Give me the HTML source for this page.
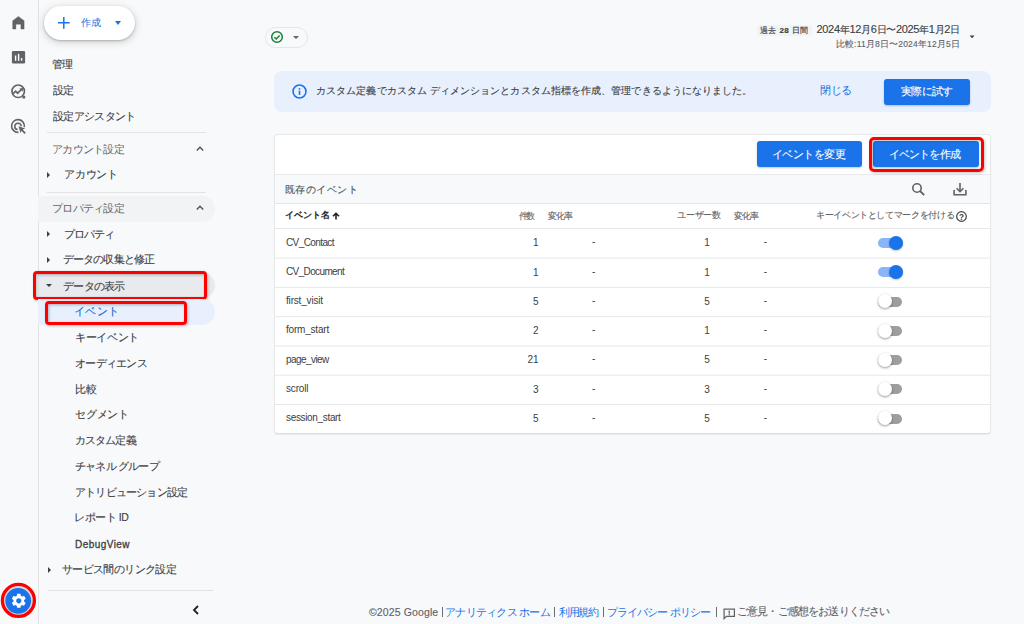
<!DOCTYPE html>
<html><head><meta charset="utf-8">
<style>
*{box-sizing:border-box;margin:0;padding:0}
html,body{width:1024px;height:624px;overflow:hidden;background:#f8f9fa;font-family:"Liberation Sans",sans-serif;color:#3c4043}
.a{position:absolute;white-space:nowrap}
.t{line-height:1.25}
.div{position:absolute;height:1px;background:#dadce0}
.tri{position:absolute;width:0;height:0;border-top:3px solid transparent;border-bottom:3px solid transparent;border-left:3.5px solid #3c4043}
.trid{position:absolute;width:0;height:0;border-left:3px solid transparent;border-right:3px solid transparent;border-top:3px solid #3c4043}
.red{position:absolute;border:3px solid #ff0000;border-radius:4px;box-shadow:1px 1px 3px rgba(0,0,0,.25), inset 1px 1px 3px rgba(0,0,0,.28)}
.td{font-size:10px;line-height:14px;color:#3c4043}
.lk{color:#1a73e8}
.sk{-webkit-text-stroke:0.12px currentColor}

.k{font-size:10px}

</style></head><body>
<div class="a" style="left:38px;top:0;width:1px;height:624px;background:#e3e3e3"></div>
<svg class="a" style="left:0;top:0" width="40" height="624" viewBox="0 0 40 624">
<path d="M18.4 16.4 L24.1 20.7 V29.1 H20.9 V24.2 H15.9 V29.1 H12.7 V20.7 Z" fill="#5f6368" stroke="#5f6368" stroke-width="0.4" stroke-linejoin="round"/>
<rect x="11.9" y="50.9" width="13.2" height="12.7" rx="1.4" fill="#5f6368"/>
<rect x="14.9" y="55.5" width="1.4" height="5.3" fill="#fff"/><rect x="17.9" y="53.9" width="1.4" height="6.9" fill="#fff"/><rect x="20.9" y="58" width="1.4" height="2.8" fill="#fff"/>
<circle cx="18.2" cy="91.3" r="6.25" fill="none" stroke="#5f6368" stroke-width="1.6"/><path d="M22.6 95.7 H25.2 V98.5 H22.4 Z" fill="#5f6368"/>
<path d="M13.2 93.6 L15.6 91.2 L17.6 93.2 L21.4 89.5" fill="none" stroke="#5f6368" stroke-width="1.7"/>
<path d="M19.3 88.4 L23.1 88 L22.7 91.8 Z" fill="#5f6368"/>
<path d="M24.3 127.2 A6.4 6.4 0 1 0 18.5 132.4" fill="none" stroke="#5f6368" stroke-width="1.6"/>
<path d="M21.2 126.3 A3.2 3.2 0 1 0 17.6 129.6" fill="none" stroke="#5f6368" stroke-width="1.5"/>
<path d="M18.6 126.2 L25.2 128.6 L22.6 129.6 L25.8 132.8 L24.6 134 L21.4 130.8 L20.5 133.3 Z" fill="#5f6368"/>
<circle cx="18.4" cy="600.4" r="16" fill="#d3d6d9" stroke="#ff0000" stroke-width="3.3"/>
<circle cx="18.2" cy="600.8" r="12.9" fill="#1a73e8"/>
</svg>
<svg class="a" style="left:9.9px;top:592.3px" width="17.6" height="17.6" viewBox="0 0 24 24"><path fill="#fff" d="M19.14 12.94c.04-.3.06-.61.06-.94 0-.32-.02-.64-.07-.94l2.03-1.58a.49.49 0 0 0 .12-.61l-1.92-3.32a.488.488 0 0 0-.59-.22l-2.39.96c-.5-.38-1.03-.7-1.62-.94l-.36-2.54a.484.484 0 0 0-.48-.41h-3.84c-.24 0-.43.17-.47.41l-.36 2.54c-.59.24-1.13.57-1.62.94l-2.39-.96c-.22-.08-.47 0-.59.22L2.74 8.87c-.12.21-.08.47.12.61l2.03 1.58c-.05.3-.09.63-.09.94s.02.64.07.94l-2.03 1.58a.49.49 0 0 0-.12.61l1.92 3.32c.12.22.37.29.59.22l2.39-.96c.5.38 1.03.7 1.62.94l.36 2.54c.05.24.24.41.48.41h3.84c.24 0 .44-.17.47-.41l.36-2.54c.59-.24 1.13-.56 1.62-.94l2.39.96c.22.08.47 0 .59-.22l1.92-3.32c.12-.22.07-.47-.12-.61l-2.01-1.58zM12 15.6c-1.98 0-3.6-1.62-3.6-3.6s1.62-3.6 3.6-3.6 3.6 1.62 3.6 3.6-1.62 3.6-3.6 3.6z"/></svg>

<!-- create -->
<div class="a" style="left:44px;top:5.5px;width:91px;height:34.5px;border-radius:17px;background:#fff;box-shadow:0 1px 2px rgba(60,64,67,.3),0 2px 6px 2px rgba(60,64,67,.15)"></div>
<svg class="a" style="left:57px;top:16px" width="14" height="14" viewBox="0 0 14 14"><path d="M6.8 1 V12.7 M1 6.8 H12.7" stroke="#1a73e8" stroke-width="1.5"/></svg>
<div class="trid" style="left:114.5px;top:21.3px;border-top:4px solid #1a73e8;border-left-width:3.5px;border-right-width:3.5px"></div>

<!-- nav shapes -->
<div class="div" style="left:47px;top:132px;width:159px;background:#e3e3e3"></div>
<div class="a" style="left:195.6px;top:146.4px;width:8px;height:5px"><svg width="8" height="5" viewBox="0 0 8 5" style="display:block"><path d="M0.8 4.4 L4 1.2 L7.2 4.4" fill="none" stroke="#4d5156" stroke-width="1.35"/></svg></div>
<div class="tri" style="left:47.1px;top:172px"></div>
<div class="div" style="left:47px;top:192px;width:159px;background:#e3e3e3"></div>
<div class="a" style="left:38px;top:196px;width:177px;height:25.5px;border-radius:0 13px 13px 0;background:#f1f3f4"></div>
<div class="a" style="left:195.6px;top:205.4px;width:8px;height:5px"><svg width="8" height="5" viewBox="0 0 8 5" style="display:block"><path d="M0.8 4.4 L4 1.2 L7.2 4.4" fill="none" stroke="#4d5156" stroke-width="1.35"/></svg></div>
<div class="tri" style="left:47.1px;top:231.3px"></div>
<div class="tri" style="left:47.1px;top:257px"></div>
<div class="a" style="left:38px;top:272.5px;width:177px;height:25.5px;border-radius:0 13px 13px 0;background:#e8eaed"></div>
<div class="trid" style="left:46.1px;top:283.8px;border-top-width:3.3px"></div>
<div class="red" style="left:33.2px;top:270.6px;width:173.8px;height:29.2px"></div>
<div class="a" style="left:38px;top:299px;width:177px;height:25.5px;border-radius:0 13px 13px 0;background:#e8f0fe"></div>
<div class="red" style="left:45px;top:300.5px;width:142px;height:24.5px"></div>
<div class="tri" style="left:47.6px;top:566.5px"></div>
<div class="div" style="left:47.5px;top:590px;width:165px;background:#e3e3e3"></div>
<svg class="a" style="left:192px;top:604.7px" width="8" height="10" viewBox="0 0 8 10"><path d="M6 1 L2 5 L6 9" fill="none" stroke="#202124" stroke-width="1.8"/></svg>

<!-- status chip -->
<div class="a" style="left:264.5px;top:27px;width:43.5px;height:20.5px;border-radius:11px;border:1px solid #e3e5e8;background:#f8f9fa"></div>
<svg class="a" style="left:270px;top:30px" width="14" height="14" viewBox="0 0 14 14"><circle cx="7" cy="7" r="5.3" fill="none" stroke="#188038" stroke-width="1.5"/><path d="M4.4 7.2 L6.2 9 L9.6 5.4" fill="none" stroke="#188038" stroke-width="1.5"/></svg>
<div class="trid" style="left:292.6px;top:35.8px;border-top-color:#5f6368"></div>

<!-- date -->
<div class="a" style="left:757px;top:25px;width:55px;height:11px;background:#f1f3f4;border-radius:2px"></div>
<svg class="a" style="left:968px;top:34px" width="8" height="6" viewBox="0 0 8 6"><path d="M1.6 1.6 H6.6 L4.1 4.3 Z" fill="#3c4043"/></svg>

<!-- banner -->
<div class="a" style="left:274px;top:71px;width:717px;height:41px;border-radius:8px;background:#e8f0fe"></div>
<svg class="a" style="left:291.5px;top:84px" width="15" height="15" viewBox="0 0 15 15"><circle cx="7.5" cy="7.5" r="6.45" fill="none" stroke="#1a73e8" stroke-width="1.6"/><rect x="6.7" y="6.6" width="1.6" height="4.3" fill="#1a73e8"/><rect x="6.7" y="4.1" width="1.6" height="1.5" fill="#1a73e8"/></svg>
<div class="a" style="left:884px;top:79px;width:86px;height:26px;border-radius:3px;background:#1a73e8;box-shadow:0 1px 2px rgba(60,64,67,.3)"></div>

<!-- card -->
<div class="a" style="left:274px;top:134px;width:717px;height:300px;border:1px solid #e6e8ea;border-bottom-color:#dcdee0;border-radius:4px;background:#fff;overflow:hidden;box-shadow:0 1px 1px rgba(60,64,67,.08)">
  <div class="a" style="left:0;top:39px;width:715px;height:30px;background:#f8f9fa;border-top:1px solid #e8eaed;border-bottom:1px solid #e3e5e8"></div>
</div>
<div class="a" style="left:757px;top:141px;width:105px;height:26px;border-radius:3px;background:#1a73e8;box-shadow:0 1px 2px rgba(60,64,67,.3)"></div>
<div class="a" style="left:873px;top:141px;width:106px;height:26px;border-radius:3px;background:#1a73e8;box-shadow:0 1px 2px rgba(60,64,67,.3)"></div>
<div class="red" style="left:869px;top:137px;width:115px;height:34.5px;border-radius:5px"></div>
<svg class="a" style="left:911px;top:182px" width="15" height="15" viewBox="0 0 15 15"><circle cx="6" cy="6" r="4.2" fill="none" stroke="#5f6368" stroke-width="1.6"/><path d="M9 9 L13.2 13.2" stroke="#5f6368" stroke-width="1.8"/></svg>
<svg class="a" style="left:952px;top:181px" width="16" height="16" viewBox="0 0 16 16"><path d="M8 2 V10.6 M4.6 7.3 L8 10.7 L11.4 7.3" fill="none" stroke="#5f6368" stroke-width="1.6"/><path d="M2.1 8.9 V13.8 H13.9 V8.9" fill="none" stroke="#5f6368" stroke-width="1.6"/></svg>
<svg class="a" style="left:332px;top:212px" width="8" height="8" viewBox="0 0 8 8"><path d="M4 7.5 V1.5 M1 4.3 L4 1.3 L7 4.3" fill="none" stroke="#202124" stroke-width="1.6"/></svg>
<svg class="a" style="left:956.2px;top:211.1px" width="11" height="11" viewBox="0 0 11 11"><circle cx="5.5" cy="5.5" r="4.8" fill="none" stroke="#3c4043" stroke-width="1.2"/><text x="5.5" y="8.6" font-size="8.2" font-weight="bold" text-anchor="middle" fill="#3c4043" font-family="Liberation Sans">?</text></svg>

<!-- footer -->
<div class="a" style="left:441.8px;top:607.4px;width:1.2px;height:9.4px;background:#6b6f74"></div>
<div class="a" style="left:553.9px;top:607.4px;width:1.2px;height:9.4px;background:#6b6f74"></div>
<div class="a" style="left:602.5px;top:607.4px;width:1.2px;height:9.4px;background:#6b6f74"></div>
<div class="a" style="left:715.6px;top:607.4px;width:1.2px;height:9.4px;background:#6b6f74"></div>
<svg class="a" style="left:722.5px;top:607.5px" width="13" height="12" viewBox="0 0 13 12"><path d="M1.1 1.1 H11.4 V8.3 H3.4 L1.1 10.6 Z" fill="none" stroke="#5f6368" stroke-width="1.25"/><rect x="5.6" y="2.6" width="1.3" height="3" fill="#5f6368"/><rect x="5.6" y="6.1" width="1.3" height="1.2" fill="#5f6368"/></svg>

<div class="a" style="left:877.6px;top:238.03px;width:25px;height:10px;border-radius:5px;background:#8ab4f8"></div>
<div class="a" style="left:888.8px;top:235.83px;width:14.4px;height:14.4px;border-radius:50%;background:#1a73e8;box-shadow:0 1px 2px rgba(0,0,0,.25)"></div>
<div class="a" style="left:877.6px;top:267.29px;width:25px;height:10px;border-radius:5px;background:#8ab4f8"></div>
<div class="a" style="left:888.8px;top:265.09px;width:14.4px;height:14.4px;border-radius:50%;background:#1a73e8;box-shadow:0 1px 2px rgba(0,0,0,.25)"></div>
<div class="a" style="left:877.6px;top:296.55px;width:24.2px;height:10px;border-radius:5px;background:#9e9e9e"></div>
<div class="a" style="left:877.6px;top:294.35px;width:14px;height:14px;border-radius:50%;background:#fff;box-shadow:0 1px 2.5px rgba(0,0,0,.4)"></div>
<div class="a" style="left:877.6px;top:325.81px;width:24.2px;height:10px;border-radius:5px;background:#9e9e9e"></div>
<div class="a" style="left:877.6px;top:323.61px;width:14px;height:14px;border-radius:50%;background:#fff;box-shadow:0 1px 2.5px rgba(0,0,0,.4)"></div>
<div class="a" style="left:877.6px;top:355.07px;width:24.2px;height:10px;border-radius:5px;background:#9e9e9e"></div>
<div class="a" style="left:877.6px;top:352.87px;width:14px;height:14px;border-radius:50%;background:#fff;box-shadow:0 1px 2.5px rgba(0,0,0,.4)"></div>
<div class="a" style="left:877.6px;top:384.33px;width:24.2px;height:10px;border-radius:5px;background:#9e9e9e"></div>
<div class="a" style="left:877.6px;top:382.13px;width:14px;height:14px;border-radius:50%;background:#fff;box-shadow:0 1px 2.5px rgba(0,0,0,.4)"></div>
<div class="a" style="left:877.6px;top:413.59px;width:24.2px;height:10px;border-radius:5px;background:#9e9e9e"></div>
<div class="a" style="left:877.6px;top:411.39px;width:14px;height:14px;border-radius:50%;background:#fff;box-shadow:0 1px 2.5px rgba(0,0,0,.4)"></div><svg class="a" style="left:0;top:0" width="1024" height="624" shape-rendering="geometricPrecision"><rect x="275" y="228.00" width="715" height="1" fill="#e6e8eb"/><rect x="275" y="257.66" width="715" height="1" fill="#e6e8eb"/><rect x="275" y="286.92" width="715" height="1" fill="#e6e8eb"/><rect x="275" y="316.18" width="715" height="1" fill="#e6e8eb"/><rect x="275" y="345.44" width="715" height="1" fill="#e6e8eb"/><rect x="275" y="374.70" width="715" height="1" fill="#e6e8eb"/><rect x="275" y="403.96" width="715" height="1" fill="#e6e8eb"/></svg>
<div class="a t" id="c_create" style="left:81.00px;top:16.90px;font-size:10.00px;color:#1a73e8;letter-spacing:0.000px">作成</div>
<div class="a t sk" id="n_kanri" style="left:52.00px;top:58.02px;font-size:10.50px;color:#3c4043;letter-spacing:-0.900px">管理</div>
<div class="a t sk" id="n_settei" style="left:53.00px;top:84.00px;font-size:10.50px;color:#3c4043;letter-spacing:-0.900px">設定</div>
<div class="a t sk" id="n_assist" style="left:53.00px;top:109.50px;font-size:10.50px;color:#3c4043;letter-spacing:-0.643px">設定アシスタント</div>
<div class="a t" id="n_acct_h" style="left:52.00px;top:143.00px;font-size:10.50px;color:#5f6368;letter-spacing:-0.750px">アカウント設定</div>
<div class="a t sk" id="n_acct" style="left:64.00px;top:168.00px;font-size:10.50px;color:#3c4043;letter-spacing:-0.226px">アカウント</div>
<div class="a t" id="n_prop_h" style="left:52.00px;top:202.00px;font-size:10.50px;color:#5f6368;letter-spacing:-0.750px">プロパティ設定</div>
<div class="a t sk" id="n_prop" style="left:64.00px;top:228.00px;font-size:10.50px;color:#3c4043;letter-spacing:-0.900px">プロパティ</div>
<div class="a t sk" id="n_collect" style="left:63.00px;top:253.00px;font-size:10.50px;color:#3c4043;letter-spacing:-0.900px">データの収集と修正</div>
<div class="a t sk" id="n_display" style="left:63.00px;top:280.00px;font-size:10.50px;color:#3c4043;letter-spacing:-0.720px">データの表示</div>
<div class="a t sk" id="n_event" style="left:74.00px;top:305.00px;font-size:10.50px;color:#1967d2;letter-spacing:0.300px">イベント</div>
<div class="a t sk" id="n_keyev" style="left:75.00px;top:330.50px;font-size:10.50px;color:#3c4043;letter-spacing:-0.360px">キーイベント</div>
<div class="a t sk" id="n_aud" style="left:75.00px;top:356.50px;font-size:10.50px;color:#3c4043;letter-spacing:-0.750px">オーディエンス</div>
<div class="a t sk" id="n_hikaku" style="left:75.00px;top:383.00px;font-size:10.50px;color:#3c4043;letter-spacing:-0.000px">比較</div>
<div class="a t sk" id="n_seg" style="left:75.00px;top:408.00px;font-size:10.50px;color:#3c4043;letter-spacing:-0.225px">セグメント</div>
<div class="a t sk" id="n_custom" style="left:75.00px;top:434.00px;font-size:10.50px;color:#3c4043;letter-spacing:-0.900px">カスタム定義</div>
<div class="a t sk" id="n_channel" style="left:75.00px;top:460.00px;font-size:10.50px;color:#3c4043;letter-spacing:-0.787px">チャネル グループ</div>
<div class="a t sk" id="n_attr" style="left:75.00px;top:486.00px;font-size:10.50px;color:#3c4043;letter-spacing:-0.810px">アトリビューション設定</div>
<div class="a t sk" id="n_report" style="left:74.00px;top:511.00px;font-size:10.50px;color:#3c4043;letter-spacing:-0.450px">レポート ID</div>
<div class="a t" id="n_debug" style="left:75.00px;top:539.00px;font-size:10.00px;color:#3c4043;letter-spacing:0.450px;-webkit-text-stroke:0.3px #3c4043">DebugView</div>
<div class="a t sk" id="n_link" style="left:62.00px;top:563.00px;font-size:10.50px;color:#3c4043;letter-spacing:-0.630px">サービス間のリンク設定</div>
<div class="a t" id="d_past" style="left:760.00px;top:26.00px;font-size:8.00px;color:#3c4043;letter-spacing:0.386px;-webkit-text-stroke:0.15px #3c4043">過去 <b>28</b> 日間</div>
<div class="a t" id="d_main" style="left:816.50px;top:23.25px;font-size:11.00px;color:#3c4043;letter-spacing:-0.320px;-webkit-text-stroke:0.12px #3c4043">2024<span class=k>年</span>12<span class=k>月</span>6<span class=k>日〜</span>2025<span class=k>年</span>1<span class=k>月</span>2<span class=k>日</span></div>
<div class="a t sk" id="d_cmp" style="left:835.75px;top:39.25px;font-size:8.50px;color:#5f6368;letter-spacing:0.175px">比較:11月8日〜2024年12月5日</div>
<div class="a t sk" id="b_text" style="left:316.00px;top:85.25px;font-size:10.00px;color:#3c4043;letter-spacing:0.084px">カスタム定義でカスタム ディメンションとカスタム指標を作成、管理できるようになりました。</div>
<div class="a t" id="b_close" style="left:820.00px;top:84.00px;font-size:10.50px;color:#1967d2;letter-spacing:-0.450px">閉じる</div>
<div class="a t sk" id="b_try" style="left:901.00px;top:85.00px;font-size:10.50px;color:#ffffff;letter-spacing:-0.675px">実際に試す</div>
<div class="a t sk" id="btn1" style="left:772.00px;top:147.75px;font-size:10.50px;color:#ffffff;letter-spacing:-0.525px">イベントを変更</div>
<div class="a t sk" id="btn2" style="left:889.00px;top:147.75px;font-size:10.50px;color:#ffffff;letter-spacing:-0.900px">イベントを作成</div>
<div class="a t sk" id="sec" style="left:285.00px;top:184.00px;font-size:10.00px;color:#51565b;letter-spacing:0.450px">既存のイベント</div>
<div class="a t" id="th_name" style="left:285.00px;top:210.00px;font-size:9.00px;color:#202124;letter-spacing:-0.112px;-webkit-text-stroke:0.4px #202124">イベント名</div>
<div class="a t sk" id="th_cnt" style="left:518.50px;top:210.50px;font-size:9.00px;color:#5f6368;letter-spacing:-1.350px">件数</div>
<div class="a t sk" id="th_rate1" style="left:548.00px;top:210.50px;font-size:9.00px;color:#5f6368;letter-spacing:-0.900px">変化率</div>
<div class="a t sk" id="th_user" style="left:677.00px;top:210.25px;font-size:9.00px;color:#5f6368;letter-spacing:-0.224px">ユーザー数</div>
<div class="a t sk" id="th_rate2" style="left:734.00px;top:210.75px;font-size:9.00px;color:#5f6368;letter-spacing:-0.900px">変化率</div>
<div class="a t sk" id="th_key" style="left:816.00px;top:210.00px;font-size:9.00px;color:#5f6368;letter-spacing:-0.360px">キーイベントとしてマークを付ける</div>
<div class="a t sk" id="f_copy" style="left:369.00px;top:605.50px;font-size:10.50px;color:#5f6368;letter-spacing:0.122px">©2025 Google</div>
<div class="a t sk" id="f_feedback" style="left:737.00px;top:605.00px;font-size:10.50px;color:#5f6368;letter-spacing:-0.836px">ご意見・ご感想をお送りください</div>
<div class="a t" id="f_home" style="left:445.00px;top:605.50px;font-size:10.50px;color:#1a73e8;letter-spacing:-0.720px">アナリティクス ホーム</div>
<div class="a t" id="f_terms" style="left:559.00px;top:606.00px;font-size:10.50px;color:#1a73e8;letter-spacing:-1.500px">利用規約</div>
<div class="a t" id="f_priv" style="left:606.50px;top:606.00px;font-size:10.50px;color:#1a73e8;letter-spacing:-0.810px">プライバシー ポリシー</div>
<div class="a t" id="r0_cnt_0_538.65" style="left:478.65px;top:237.26px;font-size:10.00px;color:#3c4043;letter-spacing:0.000px;width:60px;text-align:right">1</div>
<div class="a t" id="r0_dash_0_None" style="left:592.00px;top:236.30px;font-size:10.00px;color:#3c4043;letter-spacing:0.000px">-</div>
<div class="a t" id="r0_cnt_0_709.9" style="left:649.90px;top:237.26px;font-size:10.00px;color:#3c4043;letter-spacing:0.000px;width:60px;text-align:right">1</div>
<div class="a t" id="r0_dash_171.80000000000007_None" style="left:763.80px;top:236.30px;font-size:10.00px;color:#3c4043;letter-spacing:0.000px">-</div>
<div class="a t" id="r0_name" style="left:286.00px;top:236.50px;font-size:10.00px;color:#3c4043;letter-spacing:-0.600px">CV_Contact</div>
<div class="a t" id="r1_cnt_0_538.65" style="left:478.65px;top:266.52px;font-size:10.00px;color:#3c4043;letter-spacing:0.000px;width:60px;text-align:right">1</div>
<div class="a t" id="r1_dash_0_None" style="left:592.00px;top:265.56px;font-size:10.00px;color:#3c4043;letter-spacing:0.000px">-</div>
<div class="a t" id="r1_cnt_0_709.9" style="left:649.90px;top:266.52px;font-size:10.00px;color:#3c4043;letter-spacing:0.000px;width:60px;text-align:right">1</div>
<div class="a t" id="r1_dash_171.80000000000007_None" style="left:763.80px;top:265.56px;font-size:10.00px;color:#3c4043;letter-spacing:0.000px">-</div>
<div class="a t" id="r1_name" style="left:286.00px;top:265.76px;font-size:10.00px;color:#3c4043;letter-spacing:-0.630px">CV_Document</div>
<div class="a t" id="r2_cnt_0_538.65" style="left:478.65px;top:295.78px;font-size:10.00px;color:#3c4043;letter-spacing:0.000px;width:60px;text-align:right">5</div>
<div class="a t" id="r2_dash_0_None" style="left:592.00px;top:294.82px;font-size:10.00px;color:#3c4043;letter-spacing:0.000px">-</div>
<div class="a t" id="r2_cnt_0_709.9" style="left:649.90px;top:295.78px;font-size:10.00px;color:#3c4043;letter-spacing:0.000px;width:60px;text-align:right">5</div>
<div class="a t" id="r2_dash_171.80000000000007_None" style="left:763.80px;top:294.82px;font-size:10.00px;color:#3c4043;letter-spacing:0.000px">-</div>
<div class="a t" id="r2_name" style="left:286.00px;top:295.02px;font-size:10.00px;color:#3c4043;letter-spacing:-0.180px">first_visit</div>
<div class="a t" id="r3_cnt_0_538.65" style="left:478.65px;top:325.04px;font-size:10.00px;color:#3c4043;letter-spacing:0.000px;width:60px;text-align:right">2</div>
<div class="a t" id="r3_dash_0_None" style="left:592.00px;top:324.08px;font-size:10.00px;color:#3c4043;letter-spacing:0.000px">-</div>
<div class="a t" id="r3_cnt_0_709.9" style="left:649.90px;top:325.04px;font-size:10.00px;color:#3c4043;letter-spacing:0.000px;width:60px;text-align:right">1</div>
<div class="a t" id="r3_dash_171.80000000000007_None" style="left:763.80px;top:324.08px;font-size:10.00px;color:#3c4043;letter-spacing:0.000px">-</div>
<div class="a t" id="r3_name" style="left:286.00px;top:324.28px;font-size:10.00px;color:#3c4043;letter-spacing:-0.200px">form_start</div>
<div class="a t" id="r4_cnt_0_538.65" style="left:478.65px;top:354.30px;font-size:10.00px;color:#3c4043;letter-spacing:0.000px;width:60px;text-align:right">21</div>
<div class="a t" id="r4_dash_0_None" style="left:592.00px;top:353.34px;font-size:10.00px;color:#3c4043;letter-spacing:0.000px">-</div>
<div class="a t" id="r4_cnt_0_709.9" style="left:649.90px;top:354.30px;font-size:10.00px;color:#3c4043;letter-spacing:0.000px;width:60px;text-align:right">5</div>
<div class="a t" id="r4_dash_171.80000000000007_None" style="left:763.80px;top:353.34px;font-size:10.00px;color:#3c4043;letter-spacing:0.000px">-</div>
<div class="a t" id="r4_name" style="left:286.00px;top:353.54px;font-size:10.00px;color:#3c4043;letter-spacing:-0.562px">page_view</div>
<div class="a t" id="r5_cnt_0_538.65" style="left:478.65px;top:383.56px;font-size:10.00px;color:#3c4043;letter-spacing:0.000px;width:60px;text-align:right">3</div>
<div class="a t" id="r5_dash_0_None" style="left:592.00px;top:382.60px;font-size:10.00px;color:#3c4043;letter-spacing:0.000px">-</div>
<div class="a t" id="r5_cnt_0_709.9" style="left:649.90px;top:383.56px;font-size:10.00px;color:#3c4043;letter-spacing:0.000px;width:60px;text-align:right">3</div>
<div class="a t" id="r5_dash_171.80000000000007_None" style="left:763.80px;top:382.60px;font-size:10.00px;color:#3c4043;letter-spacing:0.000px">-</div>
<div class="a t" id="r5_name" style="left:286.00px;top:382.80px;font-size:10.00px;color:#3c4043;letter-spacing:-0.180px">scroll</div>
<div class="a t" id="r6_cnt_0_538.65" style="left:478.65px;top:412.82px;font-size:10.00px;color:#3c4043;letter-spacing:0.000px;width:60px;text-align:right">5</div>
<div class="a t" id="r6_dash_0_None" style="left:592.00px;top:411.86px;font-size:10.00px;color:#3c4043;letter-spacing:0.000px">-</div>
<div class="a t" id="r6_cnt_0_709.9" style="left:649.90px;top:412.82px;font-size:10.00px;color:#3c4043;letter-spacing:0.000px;width:60px;text-align:right">5</div>
<div class="a t" id="r6_dash_171.80000000000007_None" style="left:763.80px;top:411.86px;font-size:10.00px;color:#3c4043;letter-spacing:0.000px">-</div>
<div class="a t" id="r6_name" style="left:286.00px;top:412.06px;font-size:10.00px;color:#3c4043;letter-spacing:-0.337px">session_start</div>
</body></html>
